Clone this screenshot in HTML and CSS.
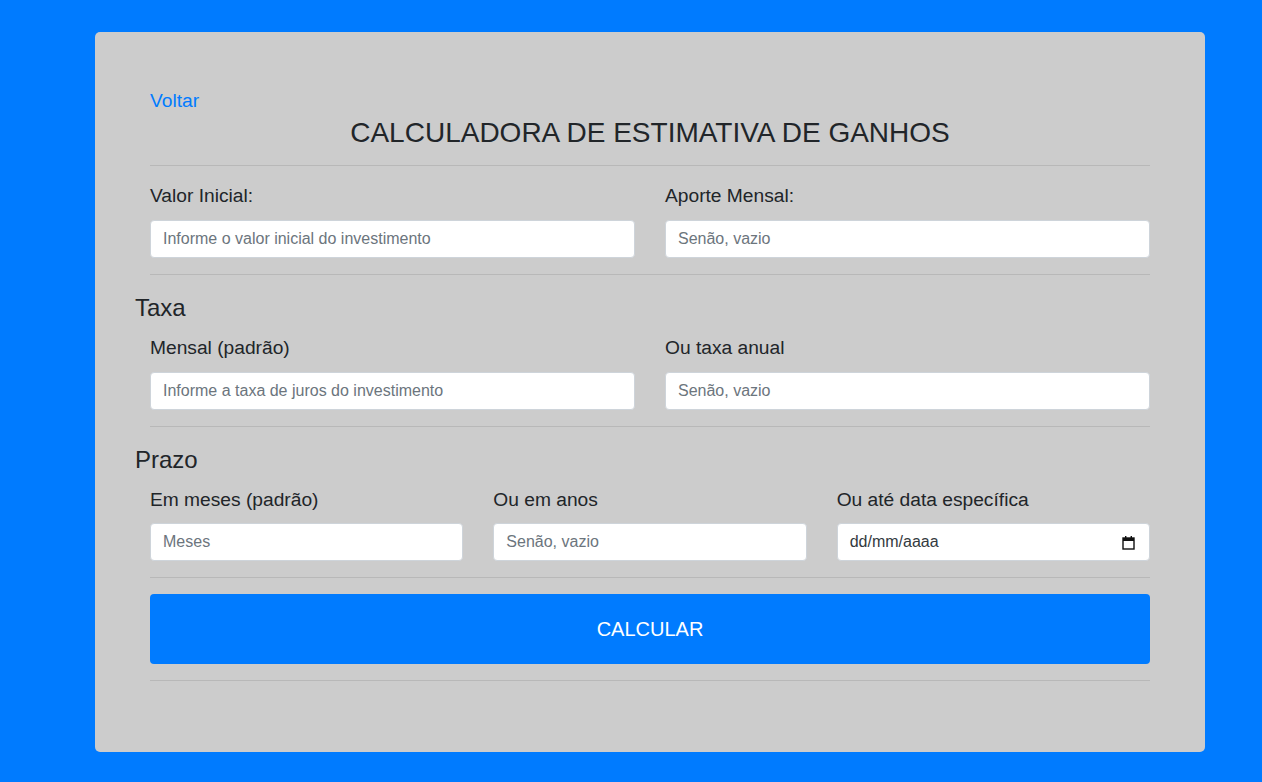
FILE: index.html
```html
<!DOCTYPE html>
<html lang="pt-BR">
<head>
<meta charset="utf-8">
<title>Calculadora de Estimativa de Ganhos</title>
<link rel="stylesheet" href="styles.css">
</head>
<body>
<main class="card">
  <div class="pad">
    <a class="back" href="#">Voltar</a>
    <h1 class="title">CALCULADORA DE ESTIMATIVA DE GANHOS</h1>
    <hr class="rule">
    <div class="row two first">
      <div class="field">
        <label class="label">Valor Inicial:</label>
        <input class="control" type="text" placeholder="Informe o valor inicial do investimento">
      </div>
      <div class="field">
        <label class="label">Aporte Mensal:</label>
        <input class="control" type="text" placeholder="Senão, vazio">
      </div>
    </div>
    <hr class="rule">
  </div>

  <h2 class="section">Taxa</h2>
  <div class="pad">
    <div class="row two">
      <div class="field">
        <label class="label">Mensal (padrão)</label>
        <input class="control" type="text" placeholder="Informe a taxa de juros do investimento">
      </div>
      <div class="field">
        <label class="label">Ou taxa anual</label>
        <input class="control" type="text" placeholder="Senão, vazio">
      </div>
    </div>
    <hr class="rule">
  </div>

  <h2 class="section">Prazo</h2>
  <div class="pad">
    <div class="row three">
      <div class="field">
        <label class="label">Em meses (padrão)</label>
        <input class="control" type="text" placeholder="Meses">
      </div>
      <div class="field">
        <label class="label">Ou em anos</label>
        <input class="control" type="text" placeholder="Senão, vazio">
      </div>
      <div class="field">
        <label class="label">Ou até data específica</label>
        <div class="control date">
          <span class="date-text">dd/mm/aaaa</span>
          <svg class="cal" width="13" height="15" viewBox="0 0 13 15" aria-hidden="true">
            <rect x="1" y="3" width="11" height="11" fill="none" stroke="#111" stroke-width="1.4"/>
            <rect x="1" y="3" width="11" height="3" fill="#111"/>
            <rect x="3" y="1" width="1.4" height="3" fill="#111"/>
            <rect x="8.6" y="1" width="1.4" height="3" fill="#111"/>
          </svg>
        </div>
      </div>
    </div>
    <hr class="rule">
    <button class="btn" type="button">CALCULAR</button>
    <hr class="rule">
  </div>
</main>
</body>
</html>
```
FILE: styles.css
```css
* { box-sizing: border-box; }

html, body {
  margin: 0;
  padding: 0;
}

body {
  background: #007bff;
  font-family: "Liberation Sans", Arial, sans-serif;
  color: #212529;
  min-height: 782px;
  padding-top: 32px;
}

.card {
  width: 1110px;
  height: 720px;
  margin-left: 95px;
  background: #cccccc;
  border-radius: 5px;
  padding: 55px 40px 0 40px;
}

.pad {
  padding: 0 15px;
}

.back {
  display: block;
  font-size: 19.2px;
  line-height: 28.8px;
  color: #007bff;
  text-decoration: none;
}

.title {
  margin: 0;
  font-size: 28px;
  font-weight: 400;
  line-height: 33.6px;
  text-align: center;
  color: #212529;
}

.rule {
  margin: 16px 0;
  border: 0;
  border-top: 1px solid #b8b8b8;
  height: 0;
}

.row {
  display: grid;
  column-gap: 30px;
}

.row.two { grid-template-columns: 1fr 1fr; }
.row.three { grid-template-columns: 1fr 1fr 1fr; }

.row.first { margin-top: 15px; }

.field {
  display: flex;
  flex-direction: column;
}

.label {
  font-size: 19.2px;
  line-height: 28.8px;
  margin-bottom: 9px;
  color: #212529;
}

.control {
  display: block;
  width: 100%;
  height: 38px;
  padding: 6px 12px;
  font-family: "Liberation Sans", Arial, sans-serif;
  font-size: 16px;
  line-height: 24px;
  color: #495057;
  background: #ffffff;
  border: 1px solid #ced4da;
  border-radius: 4px;
  outline: none;
}

.control::placeholder {
  color: #6c757d;
  opacity: 1;
}

.date {
  display: flex;
  align-items: center;
  justify-content: space-between;
  padding-right: 14px;
}

.date-text {
  color: #333a40;
}

.cal {
  display: block;
}

.section {
  margin: 19px 0 11px 0;
  font-size: 24px;
  font-weight: 400;
  line-height: 28.8px;
  color: #212529;
}

.btn {
  display: block;
  width: 100%;
  height: 70px;
  border: 0;
  border-radius: 4px;
  background: #007bff;
  color: #ffffff;
  font-family: "Liberation Sans", Arial, sans-serif;
  font-size: 20px;
  line-height: 30px;
  padding: 20px;
  cursor: pointer;
}
```
